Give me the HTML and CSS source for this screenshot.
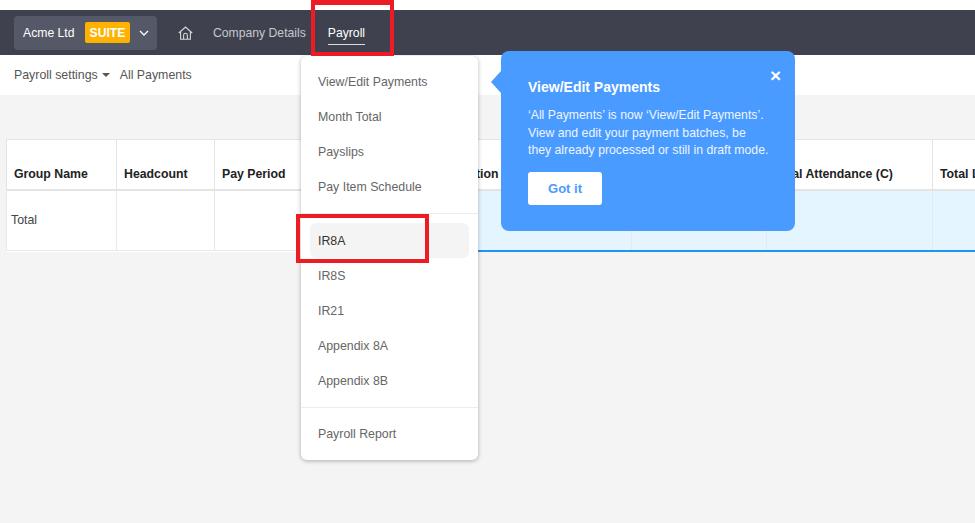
FILE: index.html
```html
<!DOCTYPE html>
<html lang="en">

<head>
    <meta charset="UTF-8">
    <title>Payroll - All Payments</title>
    <link rel="stylesheet" href="styles.css">
</head>

<body>
    <nav class="topbar">
        <div class="company">
            <span class="company-name">Acme Ltd</span>
            <span class="suite">SUITE</span>
            <svg class="chevron" width="10" height="6" viewBox="0 0 10 6"><path d="M1 1l4 4 4-4" fill="none" stroke="#fff" stroke-width="1.3"/></svg>
        </div>
        <svg class="home" width="15" height="14" viewBox="0 0 15 14"><path d="M.8 7L7.5 1l6.7 6M2.6 5.6v7.7h9.8V5.6M5.6 13.3V9.2a1.9 1.9 0 0 1 3.8 0v4.1" fill="none" stroke="#d5d6da" stroke-width="1.1"/></svg>
        <a class="nav-link">Company Details</a>
        <a class="nav-link active">Payroll</a>
    </nav>

    <div class="subnav">
        <span class="sub-link">Payroll settings</span>
        <span class="caret"></span>
        <span class="sub-link">All Payments</span>
    </div>

    <main class="content">
        <table class="summary">
            <colgroup>
                <col class="col-1"><col class="col-2"><col class="col-3"><col class="col-4"><col class="col-5"><col class="col-6"><col class="col-7">
            </colgroup>
            <thead>
                <tr>
                    <th>Group Name</th>
                    <th>Headcount</th>
                    <th>Pay Period</th>
                    <th>Allocation</th>
                    <th></th>
                    <th>Total Attendance (C)</th>
                    <th>Total Leave</th>
                </tr>
            </thead>
            <tbody>
                <tr>
                    <td class="total">Total</td>
                    <td></td>
                    <td></td>
                    <td class="hl"></td>
                    <td class="hl"></td>
                    <td class="hl"></td>
                    <td class="hl"></td>
                </tr>
            </tbody>
        </table>
    </main>

    <!-- Payroll dropdown -->
    <div class="menu">
        <ul class="menu-group">
            <li>View/Edit Payments</li>
            <li>Month Total</li>
            <li>Payslips</li>
            <li>Pay Item Schedule</li>
        </ul>
        <ul class="menu-group">
            <li class="current">IR8A</li>
            <li>IR8S</li>
            <li>IR21</li>
            <li>Appendix 8A</li>
            <li>Appendix 8B</li>
        </ul>
        <ul class="menu-group">
            <li>Payroll Report</li>
        </ul>
    </div>

    <!-- Tip popover -->
    <div class="tip">
        <span class="tip-close">&times;</span>
        <h2>View/Edit Payments</h2>
        <p>‘All Payments’ is now ‘View/Edit Payments’.<br>View and edit your payment batches, be<br>they already processed or still in draft mode.</p>
        <button type="button">Got it</button>
    </div>

    <!-- Red annotation boxes -->
    <div class="mark mark-payroll"></div>
    <div class="mark mark-ir8a"></div>
</body>

</html>
```

FILE: styles.css
```css
* {
    margin: 0;
    padding: 0;
    box-sizing: border-box;
}

html,
body {
    height: 100%;
    overflow: hidden;
}

body {
    font-family: 'Liberation Sans', Arial, sans-serif;
    font-size: 12.35px;
    background-color: #f4f4f4;
    padding-top: 10px;
    position: relative;
    display: flex;
    flex-direction: column;
    box-shadow: inset 0 10px 0 #fff;
}

/* Top navigation */
.topbar {
    height: 45px;
    background-color: #3f424e;
    display: flex;
    align-items: center;
    padding-left: 14px;
    flex-shrink: 0;
    font-size: 12.2px;
}

.company {
    width: 143px;
    height: 34px;
    background-color: #555866;
    border-radius: 4px;
    display: flex;
    align-items: center;
    padding-left: 9px;
    color: #fff;
}

.company-name {
    width: 62px;
}

.suite {
    width: 45px;
    height: 21px;
    line-height: 22px;
    text-align: center;
    font-weight: bold;
    background-color: #ffb300;
    border-radius: 2px;
}

.chevron {
    margin-left: 9px;
}

.home {
    margin-left: 21px;
}

.nav-link {
    color: #c6c8cd;
    margin-left: 22px;
    line-height: 24px;
    position: relative;
}

.home + .nav-link {
    margin-left: 20px;
}

.nav-link.active {
    color: #fff;
}

.nav-link.active::after {
    content: "";
    position: absolute;
    left: 0;
    right: 0;
    bottom: 0;
    height: 1px;
    background-color: #dcdde0;
}

/* Second row */
.subnav {
    height: 40px;
    background-color: #fff;
    display: flex;
    align-items: center;
    padding-left: 14px;
    flex-shrink: 0;
    color: #555;
}

.caret {
    width: 0;
    height: 0;
    border-left: 4px solid transparent;
    border-right: 4px solid transparent;
    border-top: 4px solid #555;
    margin: 0 10px 0 4px;
}

/* Table */
.content {
    padding: 44px 0 0 6px;
    overflow: hidden;
}

.summary {
    border-collapse: collapse;
    table-layout: fixed;
    width: 1060px;
    background-color: #fff;
}

.col-1 { width: 110px; }
.col-2 { width: 98px; }
.col-3 { width: 217px; }
.col-4 { width: 200px; }
.col-5 { width: 135px; }
.col-6 { width: 166px; }
.col-7 { width: 134px; }

.summary th {
    height: 50px;
    padding: 19px 7px 0;
    text-align: left;
    font-size: 12.3px;
    color: #222;
    white-space: nowrap;
    overflow: hidden;
    border: 1px solid #e4e4e4;
    border-bottom-width: 2px;
}

.summary td {
    height: 61px;
    border: 1px solid #e8e8e8;
    padding: 0 4px;
    color: #444;
}

.summary td.hl {
    background-color: #e4f5ff;
    border-bottom: 2px solid #1e96f0;
}

/* Dropdown */
.menu {
    position: absolute;
    left: 301px;
    top: 56px;
    width: 177px;
    height: 404px;
    background-color: #fff;
    border-radius: 6px;
    box-shadow: 0 1px 4px rgba(0, 0, 0, 0.3);
    padding: 8px 9px;
}

.menu-group {
    list-style: none;
    color: #666;
    padding-bottom: 9px;
    margin: 0 -9px 9px;
    border-bottom: 1px solid #ececec;
}

.menu-group:last-child {
    border-bottom: 0;
    padding: 0;
    margin-bottom: 0;
}

.menu-group li {
    height: 35px;
    line-height: 37px;
    margin: 0 9px;
    padding-left: 8px;
    border-radius: 6px;
}

.menu-group:last-child li {
    line-height: 35px;
}

.menu-group li.current {
    background-color: #f4f4f4;
    color: #333;
}

/* Tip */
.tip {
    position: absolute;
    left: 501px;
    top: 51px;
    width: 294px;
    height: 180px;
    background-color: #4a9bff;
    border-radius: 8px;
    padding: 28px 27px 0;
    color: #fff;
}

.tip::before {
    content: "";
    position: absolute;
    left: -10px;
    top: 20px;
    border-top: 11px solid transparent;
    border-bottom: 11px solid transparent;
    border-right: 10px solid #4a9bff;
}

.tip h2 {
    font-size: 14px;
    line-height: 17px;
    margin-bottom: 11px;
}

.tip p {
    font-size: 12.25px;
    line-height: 17.5px;
    color: #eef5ff;
    margin-bottom: 12px;
    white-space: nowrap;
}

.tip button {
    display: block;
    width: 74px;
    height: 33px;
    background-color: #fff;
    color: #4a9bff;
    font-family: inherit;
    font-size: 13px;
    font-weight: bold;
    border: none;
    border-radius: 3px;
}

.tip-close {
    position: absolute;
    right: 14px;
    top: 15px;
    font-size: 19px;
    font-weight: bold;
    line-height: 20px;
}

/* Annotations */
.mark {
    position: absolute;
    border: 4px solid #ed1c24;
}

.mark-payroll {
    left: 311px;
    top: 0;
    width: 83px;
    height: 56px;
    border-top-width: 5px;
}

.mark-ir8a {
    left: 296px;
    top: 214px;
    width: 133px;
    height: 49px;
}
```
